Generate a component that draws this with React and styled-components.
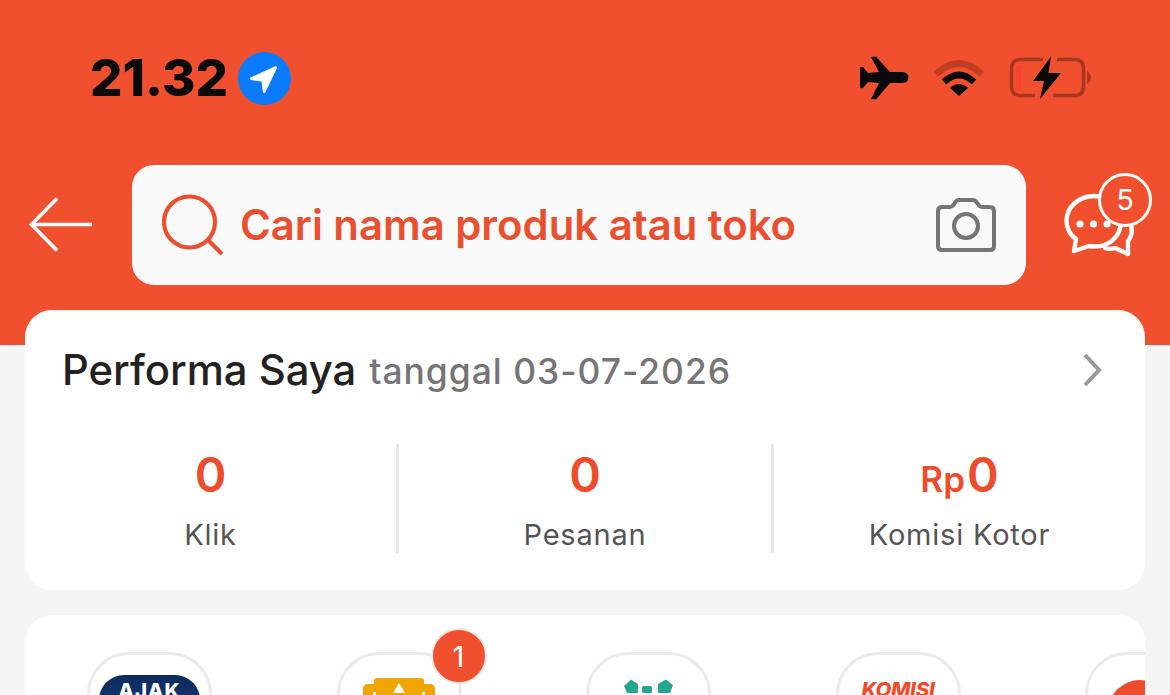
import React from "react";
import styled, { createGlobalStyle } from "styled-components";

const Global = createGlobalStyle`
  html, body { margin: 0; padding: 0; height: 695px; overflow: hidden; background: #f5f5f5; }
  * { box-sizing: border-box; }
  body { font-family: Inter, "Liberation Sans", sans-serif; }
`;

const Page = styled.div`
  width: 1170px;
  height: 695px;
  overflow: hidden;
  background: #f5f5f5;
`;
const Header = styled.header`
  height: 345px;
  background: #f1502f;
  display: flex;
  flex-direction: column;
`;
const StatusBar = styled.div`
  height: 165px;
  padding: 51px 78px 0 90px;
  display: flex;
  align-items: flex-start;
  justify-content: space-between;
`;
const TimeGroup = styled.div`
  display: flex;
  align-items: center;
  gap: 10px;
  height: 54px;
`;
const Time = styled.span`
  font-size: 51px;
  font-weight: 800;
  color: #0a0a0a;
  line-height: 54px;
`;
const StatusIcons = styled.div`
  display: flex;
  align-items: center;
  height: 54px;
  gap: 24px;
`;
const SearchRow = styled.div`
  display: flex;
  align-items: center;
  padding-left: 29px;
  height: 120px;
`;
const BackButton = styled.div`
  width: 103px;
  display: flex;
`;
const SearchBox = styled.div`
  width: 894px;
  height: 120px;
  border-radius: 22px;
  background: #fafafa;
  display: flex;
  align-items: center;
  padding: 0 30px;
`;
const Placeholder = styled.span`
  flex: 1;
  margin-left: 16px;
  margin-top: -2px;
  font-size: 41.85px;
  font-weight: 600;
  color: #ea5030;
  white-space: nowrap;
`;
const ChatWrap = styled.div`
  position: relative;
  margin-left: 38px;
  width: 72px;
  height: 64px;
  margin-top: -1px;
`;
const ChatBadge = styled.div`
  position: absolute;
  left: 34px;
  top: -20px;
  width: 54px;
  height: 54px;
  border-radius: 50%;
  background: #f1502f;
  border: 3px solid #fff;
  color: #fff;
  font-size: 29px;
  display: flex;
  align-items: center;
  justify-content: center;
`;
const Card = styled.section`
  margin: 0 25px;
  background: #fff;
  border-radius: 27px;
  overflow: hidden;
`;
const PerfCard = styled(Card)`
  margin-top: -35px;
  position: relative;
  height: 280px;
  padding-top: 35px;
`;
const TitleRow = styled.div`
  display: flex;
  align-items: center;
  padding: 0 43px 0 37px;
  height: 50px;
`;
const Title = styled.span`
  font-size: 41.8px;
  font-weight: 500;
  color: #222;
  margin-top: -1px;
`;
const DateText = styled.span`
  margin-left: 13px;
  flex: 1;
  margin-top: 3px;
  font-size: 35.4px;
  font-weight: 500;
  color: #757575;
  letter-spacing: 1px;
`;
const Stats = styled.div`
  display: grid;
  grid-template-columns: 371px 375px 1fr;
  margin-top: 49px;
  height: 109px;
`;
const Stat = styled.div`
  display: flex;
  flex-direction: column;
  align-items: center;
  border-left: ${(p) => (p.$first ? "none" : "3px solid #e8e8e8")};
`;
const Value = styled.div`
  height: 62px;
  display: flex;
  align-items: baseline;
  justify-content: center;
  font-size: 48px;
  line-height: 62px;
  font-weight: 600;
  color: #ee4d2d;
`;
const Currency = styled.span`
  font-size: 35px;
  margin-right: 2px;
`;
const Label = styled.div`
  margin-top: 11px;
  font-size: 29px;
  line-height: 36px;
  color: #555;
  letter-spacing: 0.8px;
`;
const MenuCard = styled(Card)`
  margin-top: 25px;
  height: 120px;
  display: flex;
  padding: 37px 0 0 62px;
  gap: 124.5px;
`;
const Tile = styled.div`
  position: relative;
  flex: none;
  width: 125px;
  height: 125px;
  border: 3px solid #ebebeb;
  border-radius: 42px;
  display: flex;
  justify-content: ${(p) => (p.$start ? "flex-start" : "center")};
  padding-top: 20px;
`;
const AjakPill = styled.div`
  width: 101px;
  height: 50px;
  border-radius: 25px;
  background: linear-gradient(#0d2c5e, #123a78);
  color: #fff;
  font-size: 20.5px;
  font-weight: 800;
  letter-spacing: 1px;
  text-align: center;
  line-height: 26px;
  padding-top: 3px;
`;
const KomisiText = styled.div`
  margin-top: 2px;
  font-size: 20.5px;
  font-weight: 800;
  font-style: italic;
  color: #ee4d2d;
  letter-spacing: -0.3px;
`;
const Notification = styled.div`
  position: absolute;
  left: 91px;
  top: -27px;
  width: 56px;
  height: 56px;
  border-radius: 50%;
  border: 2px solid #fbe9e5;
  background: #f1502f;
  color: #fff;
  font-size: 29px;
  display: flex;
  align-items: center;
  justify-content: center;
`;
const RedDot = styled.div`
  width: 64px;
  height: 64px;
  margin: 5px 0 0 20px;
  border-radius: 50%;
  background: #ee4d2d;
`;
const TrophyMark = styled.svg`
  margin-top: 3px;
`;
const TealMark = styled.svg`
  margin-top: 4px;
`;

const LocationIcon = () => (
  <svg width="53" height="53" viewBox="0 0 53 53">
    <circle cx="26.5" cy="26.5" r="26.5" fill="#0a7aff" />
    <path d="M12.5 25.5 L36.5 14.5 Q39.5 13.5 38.8 16.5 L27.5 40 Q25.5 42.5 24.8 39.5 L23.5 29.5 L13.5 28.3 Q11 27 12.5 25.5 Z" fill="#fff" />
  </svg>
);
const PlaneIcon = () => (
  <svg width="50" height="44" viewBox="0 0 50 44">
    <path
      d="M12 1 L17 0.5 L31 16 L43 16 Q49.5 16.5 49.5 21.5 Q49.5 26.5 43 27 L31 27 L17 43.5 L12 43 L20 27 L9 26 L4 32 Q1 33 1 31 L1 12 Q1 10 4 11 L9 17 L20 16 Z"
      fill="#0a0a0a"
    />
  </svg>
);
const WifiIcon = () => (
  <svg width="52" height="38" viewBox="0 0 52 38">
    <path d="M3 15 Q26 -6 49 15" fill="none" stroke="#c23d22" strokeWidth="6.5" />
    <path d="M11 23 Q26 9 41 23" fill="none" stroke="#0a0a0a" strokeWidth="6.5" />
    <path d="M17 29 Q26 21 35 29 L26 37 Z" fill="#0a0a0a" />
  </svg>
);
const BatteryIcon = () => (
  <svg width="83" height="44" viewBox="0 0 83 44">
    <path d="M34 3.5 H12 Q2.5 3.5 2.5 13 V30 Q2.5 39.5 12 39.5 H26 M44 39.5 H66 Q74.5 39.5 74.5 30 V13 Q74.5 3.5 66 3.5 H48" fill="none" stroke="#a93620" strokeWidth="3.6" />
    <rect x="7" y="9" width="5" height="25" fill="#ff3b30" opacity="0.75" />
    <path d="M78 15 Q82 18 82 21.5 Q82 25 78 28 Z" fill="#a93620" />
    <path d="M42 0.5 L24 25 H35 L31 43 L52 17 H39.5 Z" fill="#0a0a0a" />
  </svg>
);
const BackArrow = () => (
  <svg width="64" height="56" viewBox="0 0 64 56" fill="none" stroke="#fff" strokeWidth="3.6">
    <path d="M63 27.5 H3" />
    <path d="M28 1.5 L2.5 27.5 L28 53.5" />
  </svg>
);
const SearchIcon = () => (
  <svg width="62" height="62" viewBox="0 0 62 62" fill="none" stroke="#ea5030" strokeWidth="4.2">
    <circle cx="27.5" cy="28" r="25.5" />
    <path d="M46 46 L60 60" />
  </svg>
);
const CameraIcon = () => (
  <svg width="60" height="54" viewBox="0 0 60 54" fill="none" stroke="#757575" strokeWidth="4">
    <path d="M6 9 H14 Q16 9 17 7.5 L20 3.5 Q21 2 23 2 H37 Q39 2 40 3.5 L43 7.5 Q44 9 46 9 H54 Q58 9 58 13 V48 Q58 52 54 52 H6 Q2 52 2 48 V13 Q2 9 6 9 Z" strokeLinejoin="round" />
    <circle cx="30" cy="28" r="12" />
  </svg>
);
const ChatIcon = () => (
  <svg width="72" height="64" viewBox="0 0 72 64" fill="none" stroke="#fff" strokeWidth="4.4" strokeLinejoin="round" strokeLinecap="round">
    <path d="M58 22 C67 28 70 36 66 45 L64 48 L64 61 L51 55 C48 56 44 56 41 55" />
    <path d="M30 3 C15 3 2.5 14 2.5 28 C2.5 36 7 43 12 46 L10 58 L25 53 C44 56 57 44 57 28 C57 14 45 3 30 3 Z" />
    <circle cx="16" cy="31" r="3.6" fill="#fff" stroke="none" />
    <circle cx="29.5" cy="31" r="3.6" fill="#fff" stroke="none" />
    <circle cx="43" cy="31" r="3.6" fill="#fff" stroke="none" />
  </svg>
);
const Chevron = () => (
  <svg width="19" height="34" viewBox="0 0 19 34" fill="none" stroke="#999" strokeWidth="4">
    <path d="M2 2 L16 17 L2 32" />
  </svg>
);
const TrophyIcon = () => (
  <TrophyMark width="72" height="50" viewBox="0 0 72 50">
    <path d="M14 0 H58 Q61 0 61 3 V6 H67 Q72 6 72 11 V50 H62 V14 H59 V50 H13 V14 H10 V50 H0 V11 Q0 6 5 6 H11 V3 Q11 0 14 0 Z" fill="#f0a500" />
    <path d="M36 5 L30 15 H42 Z" fill="#fff" />
  </TrophyMark>
);
const TealMarks = () => (
  <TealMark width="50" height="15" viewBox="0 0 50 15" fill="#26a68f">
    <path d="M7 0.5 L14 5 V14 H3 L0 7 Z" />
    <rect x="18" y="7" width="10" height="7" rx="1.5" />
    <path d="M42 0.5 L49 6 L46 14 H34 V5 Z" />
  </TealMark>
);

export default function App() {
  return (
    <Page>
      <Global />
      <Header>
        <StatusBar>
          <TimeGroup>
            <Time>21.32</Time>
            <LocationIcon />
          </TimeGroup>
          <StatusIcons>
            <PlaneIcon />
            <WifiIcon />
            <BatteryIcon />
          </StatusIcons>
        </StatusBar>
        <SearchRow>
          <BackButton>
            <BackArrow />
          </BackButton>
          <SearchBox>
            <SearchIcon />
            <Placeholder>Cari nama produk atau toko</Placeholder>
            <CameraIcon />
          </SearchBox>
          <ChatWrap>
            <ChatIcon />
            <ChatBadge>5</ChatBadge>
          </ChatWrap>
        </SearchRow>
      </Header>
      <PerfCard>
        <TitleRow>
          <Title>Performa Saya</Title>
          <DateText>tanggal 03-07-2026</DateText>
          <Chevron />
        </TitleRow>
        <Stats>
          <Stat $first>
            <Value>0</Value>
            <Label>Klik</Label>
          </Stat>
          <Stat>
            <Value>0</Value>
            <Label>Pesanan</Label>
          </Stat>
          <Stat>
            <Value>
              <Currency>Rp</Currency>0
            </Value>
            <Label>Komisi Kotor</Label>
          </Stat>
        </Stats>
      </PerfCard>
      <MenuCard>
        <Tile>
          <AjakPill>AJAK</AjakPill>
        </Tile>
        <Tile>
          <TrophyIcon />
          <Notification>1</Notification>
        </Tile>
        <Tile>
          <TealMarks />
        </Tile>
        <Tile>
          <KomisiText>KOMISI</KomisiText>
        </Tile>
        <Tile $start>
          <RedDot />
        </Tile>
      </MenuCard>
    </Page>
  );
}
